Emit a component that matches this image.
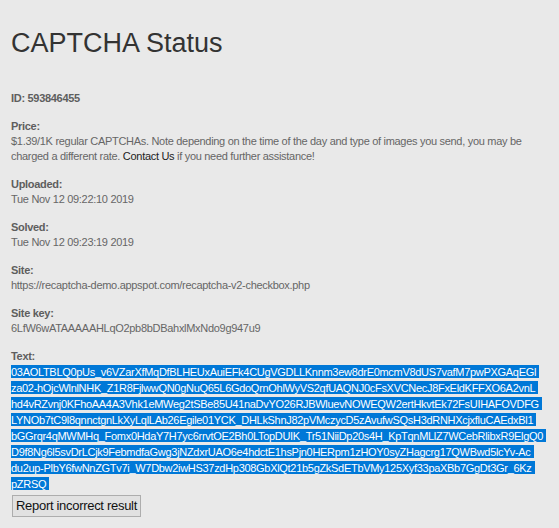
const tokenLines = [
  '03AOLTBLQ0pUs_v6VZarXfMqDfBLHEUxAuiEFk4CUgVGDLLKnnm3ew8drE0mcmV8dUS7vafM7pwPXGAqEGl',
  'za02-hOjcWlnlNHK_Z1R8FjlwwQN0gNuQ65L6GdoQrnOhlWyVS2qfUAQNJ0cFsXVCNecJ8FxEldKFFXO6A2vnL',
  'hd4vRZvnj0KFhoAA4A3Vhk1eMWeg2tSBe85U41naDvYO26RJBWluevNOWEQW2ertHkvtEk72FsUIHAFOVDFG',
  'LYNOb7tC9l8qnnctgnLkXyLqlLAb26Egile01YCK_DHLkShnJ82pVMczycD5zAvufwSQsH3dRNHXcjxfluCAEdxBl1',
  'bGGrqr4qMWMHq_Fomx0HdaY7H7yc6rrvtOE2Bh0LTopDUIK_Tr51NiiDp20s4H_KpTqnMLlZ7WCebRlibxR9ElgQ0',
  'D9f8Ng6l5svDrLCjk9FebmdfaGwg3jNZdxrUAO6e4hdctE1hsPjn0HERpm1zHOY0syZHagcrg17QWBwd5lcYv-Ac',
  'du2up-PlbY6fwNnZGTv7i_W7Dbw2iwHS37zdHp308GbXlQt21b5gZkSdETbVMy125Xyf33paXBb7GgDt3Gr_6Kz',
  'pZRSQ',
];

const Field = ({ label, children }) => (
  <div className="mb-[12px]">
    <div className="font-bold leading-[16px] text-[#5e5e5e]">{label}</div>
    <div className="leading-[15px]">{children}</div>
  </div>
);

const App = () => {
  return (
    <div className="min-h-[528px] bg-[#e9e9e9] px-[11px] font-['Liberation_Sans',Arial,sans-serif] text-[11px] tracking-[-0.3px] text-[#666]">
      <h1 className="pt-[27px] text-[27px] leading-[32px] tracking-normal text-[#333]">CAPTCHA Status</h1>

      <div className="mt-[31px] mb-[12px] font-bold leading-[16px] text-[#5e5e5e]">ID: 593846455</div>

      <Field label="Price:">
        $1.39/1K regular CAPTCHAs. Note depending on the time of the day and type of images you send, you may be
        charged a different rate. <span className="text-[#222]">Contact Us</span> if you need further assistance!
      </Field>

      <Field label="Uploaded:">Tue Nov 12 09:22:10 2019</Field>
      <Field label="Solved:">Tue Nov 12 09:23:19 2019</Field>
      <Field label="Site:">https://recaptcha-demo.appspot.com/recaptcha-v2-checkbox.php</Field>
      <Field label="Site key:">6LfW6wATAAAAAHLqO2pb8bDBahxlMxNdo9g947u9</Field>

      <div className="font-bold leading-[16px] text-[#5e5e5e]">Text:</div>
      <div className="leading-[16px]">
        {tokenLines.map((line, index) => (
          <div key={index} className="whitespace-nowrap">
            <span className="bg-[#0078d7] pt-px pr-[3px] text-white">{line}</span>
          </div>
        ))}
      </div>

      <button className="mt-[3px] ml-px h-[22px] border border-[#adadad] bg-[#e1e1e1] px-[3px] font-['Liberation_Sans',Arial,sans-serif] text-[13px] text-[#111]">
        Report incorrect result
      </button>
    </div>
  );
};

export default App;
